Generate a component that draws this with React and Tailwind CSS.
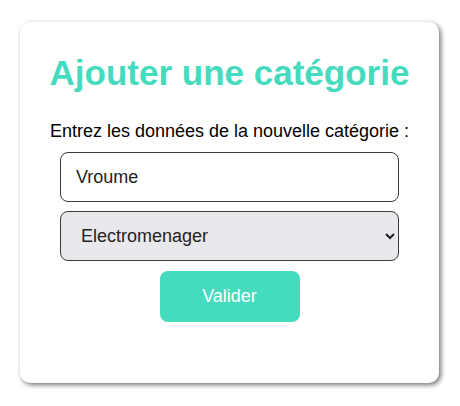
import React, { useState } from 'react';

const App = () => {
  const [name, setName] = useState('Vroume');
  const [category, setCategory] = useState('Electromenager');

  return (
    <div className="min-h-[406px] w-[460px] bg-white pt-[22px] pl-[20px]" style={{ fontFamily: '"Liberation Sans", Arial, sans-serif' }}>
      <div className="flex h-[361px] w-[419px] flex-col items-center rounded-[10px] bg-white pt-[31px] shadow-[2px_2px_5px_rgba(0,0,0,0.55)]">
        <h1 className="text-[35px] leading-[40px] font-bold text-[#45dbbe]">Ajouter une catégorie</h1>

        <p className="mt-[28px] text-[18px] leading-[21px] text-black">Entrez les données de la nouvelle catégorie :</p>

        <form className="mt-[10px] flex flex-col items-center" onSubmit={(e) => e.preventDefault()}>
          <input
            type="text"
            value={name}
            onChange={(e) => setName(e.target.value)}
            className="h-[50px] w-[339px] rounded-[8px] border border-[#3a3a3a] bg-white px-[15px] text-[18px] text-[#222] outline-none"
          />
          <select
            value={category}
            onChange={(e) => setCategory(e.target.value)}
            className="mt-[9px] h-[50px] w-[339px] rounded-[8px] border border-[#3a3a3a] bg-[#e9e9ed] pl-[16px] pr-[6px] text-[18px] text-[#222]"
          >
            <option>Electromenager</option>
            <option>Informatique</option>
            <option>Jardin</option>
          </select>
          <button type="submit" className="mt-[10px] h-[51px] w-[140px] rounded-[8px] bg-[#45dbbe] text-[18px] text-white">
            Valider
          </button>
        </form>
      </div>
    </div>
  );
};

export default App;
